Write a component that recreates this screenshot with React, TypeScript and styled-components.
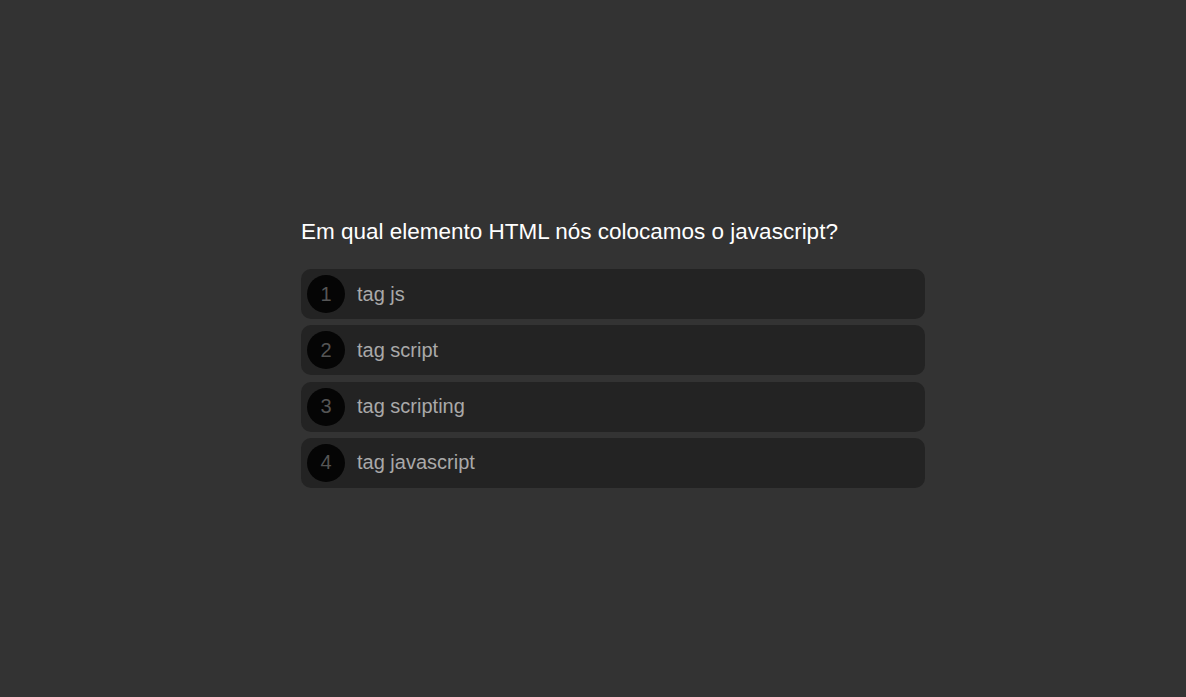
import React from 'react';
import styled, { createGlobalStyle } from 'styled-components';

const GlobalStyle = createGlobalStyle`
  html, body {
    margin: 0;
    padding: 0;
    background-color: #333333;
    font-family: 'Liberation Sans', Arial, sans-serif;
  }
`;

const Page = styled.main`
  min-height: 697px;
  box-sizing: border-box;
  display: flex;
  justify-content: center;
  align-items: center;
  padding: 10px 0 0 40px;
`;

const Quiz = styled.section`
  width: 624px;
  display: flex;
  flex-direction: column;
`;

const Question = styled.h2`
  margin: 0 0 24px;
  font-size: 22.5px;
  font-weight: 400;
  line-height: 26px;
  color: #ffffff;
`;

const Options = styled.ol`
  list-style: none;
  margin: 0;
  padding: 0;
  display: flex;
  flex-direction: column;
  gap: 6.3px;
`;

const Option = styled.li`
  height: 50px;
  box-sizing: border-box;
  padding: 0 6px;
  display: flex;
  align-items: center;
  gap: 12px;
  background-color: #232323;
  border-radius: 10px;
  cursor: pointer;
`;

const Index = styled.span`
  width: 38px;
  height: 38px;
  flex-shrink: 0;
  border-radius: 50%;
  background-color: #050505;
  color: #555555;
  font-size: 20px;
  display: flex;
  align-items: center;
  justify-content: center;
`;

const Label = styled.span`
  font-size: 20px;
  color: #a9a9a9;
`;

const answers = ['tag js', 'tag script', 'tag scripting', 'tag javascript'];

const App: React.FC = () => {
  return (
    <>
      <GlobalStyle />
      <Page>
        <Quiz>
          <Question>Em qual elemento HTML nós colocamos o javascript?</Question>
          <Options>
            {answers.map((answer, i) => (
              <Option key={answer}>
                <Index>{i + 1}</Index>
                <Label>{answer}</Label>
              </Option>
            ))}
          </Options>
        </Quiz>
      </Page>
    </>
  );
};

export default App;
